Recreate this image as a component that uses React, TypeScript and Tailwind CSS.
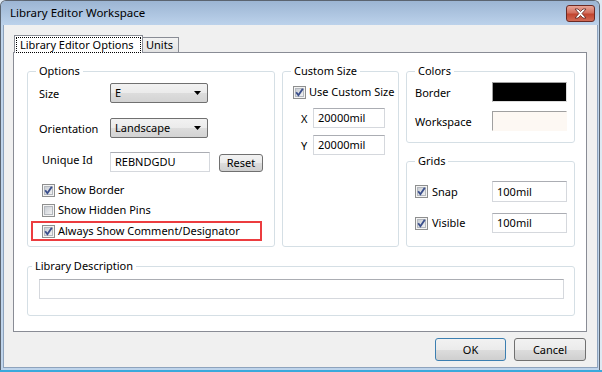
import React from "react";

function Check({ checked }: { checked: boolean }) {
  return (
    <svg width="13" height="13" viewBox="0 0 13 13" className="shrink-0">
      <defs>
        <linearGradient id="cbg" x1="0" y1="0" x2="1" y2="1">
          <stop offset="0" stopColor="#c6cbd2" />
          <stop offset="1" stopColor="#f4f4f4" />
        </linearGradient>
      </defs>
      <rect x="0.5" y="0.5" width="12" height="12" fill="#f4f4f4" stroke="#8e8f8f" />
      <rect x="2.5" y="2.5" width="8" height="8" fill="url(#cbg)" stroke="#b4b8be" />
      {checked && (
        <path d="M3.2 6.3 L5.4 9.2 L9.8 2.8" fill="none" stroke="#3b4f8c" strokeWidth="1.9" />
      )}
    </svg>
  );
}

function Combo({ value }: { value: string }) {
  return (
    <div className="flex h-[20px] w-[98px] items-center justify-between rounded-[2px] border border-[#707070] bg-[linear-gradient(#f2f2f2,#ebebeb_50%,#dddddd_50%,#d3d3d3)] pl-[4px] pr-[6px]">
      <span className="leading-[16px]">{value}</span>
      <svg width="7" height="4" viewBox="0 0 7 4">
        <path d="M0 0 H7 L3.5 4 Z" fill="#000" />
      </svg>
    </div>
  );
}

function TextBox({ value, w, h = 20 }: { value: string; w: string; h?: number }) {
  return (
    <div
      className={`flex items-center border border-[#d5d8dd] border-t-[#abadb3] bg-white pl-[4px] leading-[16px] ${w} ${h === 21 ? "h-[21px]" : "h-[20px]"}`}
    >
      {value}
    </div>
  );
}

function Btn({ label, w, h, def }: { label: string; w: string; h: string; def?: boolean }) {
  return (
    <div
      className={`flex items-center justify-center rounded-[3px] border ${def ? "border-[#3c7fb1]" : "border-[#707070]"} bg-[linear-gradient(#f2f2f2,#ebebeb_50%,#dddddd_50%,#cfcfcf)] leading-[16px] ${w} ${h}`}
    >
      <span>{label}</span>
    </div>
  );
}

export default function App() {
  return (
    <div className="flex h-[372px] w-[602px] flex-col whitespace-nowrap bg-[#dfe9f3] text-[11px] text-black [font-family:'Noto_Sans',sans-serif]">
      <div className="flex h-[370px] w-[600px] flex-col overflow-hidden rounded-t-[6px] border border-b-0 border-[#5b6470] bg-[#bfd4eb]">
        {/* Title bar */}
        <div className="flex h-[24px] shrink-0 items-center justify-between bg-[linear-gradient(#9cb5d3,#bcd2eb)] pl-[9px] pr-[4px]">
          <span className="text-[11.5px] leading-[16px]">Library Editor Workspace</span>
          <div className="mt-[4px] flex h-[17px] w-[29px] items-center justify-center self-start rounded-[3px] border border-[#6b2a24] bg-[linear-gradient(#e7a597,#d4705f_45%,#c24530_55%,#d26a55)]">
            <svg width="13" height="11" viewBox="0 0 13 11">
              <path
                d="M1 1 H4 L6.5 3.5 L9 1 H12 L8 5.5 L12 10 H9 L6.5 7.5 L4 10 H1 L5 5.5 Z"
                fill="#ffffff"
                stroke="#5a2520"
                strokeWidth="0.8"
                strokeLinejoin="round"
              />
            </svg>
          </div>
        </div>

        {/* Body */}
        <div className="ml-[2px] mr-[1px] flex h-[343px] w-[595px] flex-col border border-t-0 border-[#8ea3bd] bg-[#f0f0f0]">
          {/* Tabs */}
          <div className="ml-[10px] mt-[10px] flex h-[17px] items-end">
            <div className="relative z-10 -mb-px flex h-[18px] w-[129px] items-stretch border border-b-0 border-[#898c95] bg-white p-[1px] pb-0">
              <div className="flex flex-1 items-center border border-dotted border-black pl-[3px] leading-[14px]">
                Library Editor Options
              </div>
            </div>
            <div className="flex h-[15px] w-[36px] items-center border-r border-t border-[#898c95] bg-[linear-gradient(#f2f2f2,#e3e3e3)] pl-[3px] leading-[14px]">
              Units
            </div>
          </div>

          {/* Panel */}
          <div className="ml-[9px] flex h-[280px] w-[574px] flex-col border border-[#898c95] bg-white pl-[13px] pt-[10px]">
            <div className="flex gap-[7px]">
              {/* Options */}
              <fieldset className="h-[184px] w-[248px] rounded-[3px] border border-[#d5dfe5]">
                <legend className="ml-[8px] px-[3px] leading-[16px]">Options</legend>
                <div className="mt-[4px] flex h-[20px] items-center">
                  <span className="w-[82px] pl-[11px] pt-[2px] leading-[16px]">Size</span>
                  <Combo value="E" />
                </div>
                <div className="mt-[15px] flex h-[20px] items-center">
                  <span className="w-[82px] pl-[11px] pt-[2px] leading-[16px]">Orientation</span>
                  <Combo value="Landscape" />
                </div>
                <div className="mt-[14px] flex h-[20px] items-start">
                  <span className="w-[82px] pl-[14px] leading-[16px]">Unique Id</span>
                  <TextBox value="REBNDGDU" w="w-[100px]" />
                  <div className="ml-[9px] mt-[2px]">
                    <Btn label="Reset" w="w-[44px]" h="h-[18px]" />
                  </div>
                </div>
                <div className="mt-[8px] flex h-[20px] items-center gap-[3px] pl-[14px]">
                  <Check checked />
                  <span className="leading-[16px]">Show Border</span>
                </div>
                <div className="flex h-[20px] items-center gap-[3px] pl-[14px]">
                  <Check checked={false} />
                  <span className="leading-[16px]">Show Hidden Pins</span>
                </div>
                <div className="ml-[3px] mt-[1px] flex h-[20px] w-[231px] items-center gap-[3px] border-2 border-[#ec3c3f] pl-[9px]">
                  <Check checked />
                  <span className="leading-[16px]">Always Show Comment/Designator</span>
                </div>
              </fieldset>

              {/* Custom Size */}
              <fieldset className="h-[184px] w-[117px] rounded-[3px] border border-[#d5dfe5]">
                <legend className="ml-[8px] px-[3px] leading-[16px]">Custom Size</legend>
                <div className="mt-[3px] flex h-[20px] items-center gap-[3px] pl-[10px]">
                  <Check checked />
                  <span className="leading-[16px]">Use Custom Size</span>
                </div>
                <div className="mt-[6px] flex h-[20px] items-center pl-[18px]">
                  <span className="w-[12px] pt-[2px] leading-[16px]">X</span>
                  <TextBox value="20000mil" w="w-[72px]" />
                </div>
                <div className="mt-[7px] flex h-[20px] items-center pl-[18px]">
                  <span className="w-[12px] pt-[2px] leading-[16px]">Y</span>
                  <TextBox value="20000mil" w="w-[72px]" />
                </div>
              </fieldset>

              {/* Right column */}
              <div className="flex w-[169px] flex-col gap-[10px]">
                <fieldset className="h-[80px] rounded-[3px] border border-[#d5dfe5]">
                  <legend className="ml-[8px] px-[3px] leading-[16px]">Colors</legend>
                  <div className="mt-[3px] flex h-[20px] items-center pl-[8px]">
                    <span className="w-[77px] pt-[2px] leading-[16px]">Border</span>
                    <div className="h-[20px] w-[75px] border border-[#a0a0a0] border-b-[#dcdcdc] border-r-[#dcdcdc] bg-black" />
                  </div>
                  <div className="mt-[9px] flex h-[20px] items-center pl-[8px]">
                    <span className="w-[77px] pt-[2px] leading-[16px]">Workspace</span>
                    <div className="h-[20px] w-[75px] border border-[#a0a0a0] border-b-[#fdf8f3] border-r-[#fdf8f3] bg-[#fdf8f3]" />
                  </div>
                </fieldset>
                <fieldset className="h-[94px] rounded-[3px] border border-[#d5dfe5]">
                  <legend className="ml-[8px] px-[3px] leading-[16px]">Grids</legend>
                  <div className="mt-[12px] flex h-[21px] items-center pl-[8px]">
                    <div className="flex w-[77px] items-center gap-[4px]">
                      <Check checked />
                      <span className="leading-[16px]">Snap</span>
                    </div>
                    <TextBox value="100mil" w="w-[75px]" h={21} />
                  </div>
                  <div className="mt-[11px] flex h-[20px] items-center pl-[8px]">
                    <div className="flex w-[77px] items-center gap-[4px]">
                      <Check checked />
                      <span className="leading-[16px]">Visible</span>
                    </div>
                    <TextBox value="100mil" w="w-[75px]" />
                  </div>
                </fieldset>
              </div>
            </div>

            {/* Library Description */}
            <fieldset className="mt-[11px] h-[58px] w-[548px] rounded-[3px] border border-[#d5dfe5]">
              <legend className="ml-[4px] px-[3px] leading-[16px]">Library Description</legend>
              <div className="ml-[11px] mt-[5px] h-[20px] w-[525px] border border-[#d5d8dd] border-t-[#abadb3] bg-white" />
            </fieldset>
          </div>

          {/* Buttons */}
          <div className="mt-[6px] flex justify-end gap-[8px] pr-[11px]">
            <Btn label="OK" w="w-[71px]" h="h-[23px]" def />
            <Btn label="Cancel" w="w-[72px]" h="h-[23px]" />
          </div>
        </div>
      </div>
      <div className="h-[2px] w-[602px] bg-[#3aa9dc]" />
    </div>
  );
}
